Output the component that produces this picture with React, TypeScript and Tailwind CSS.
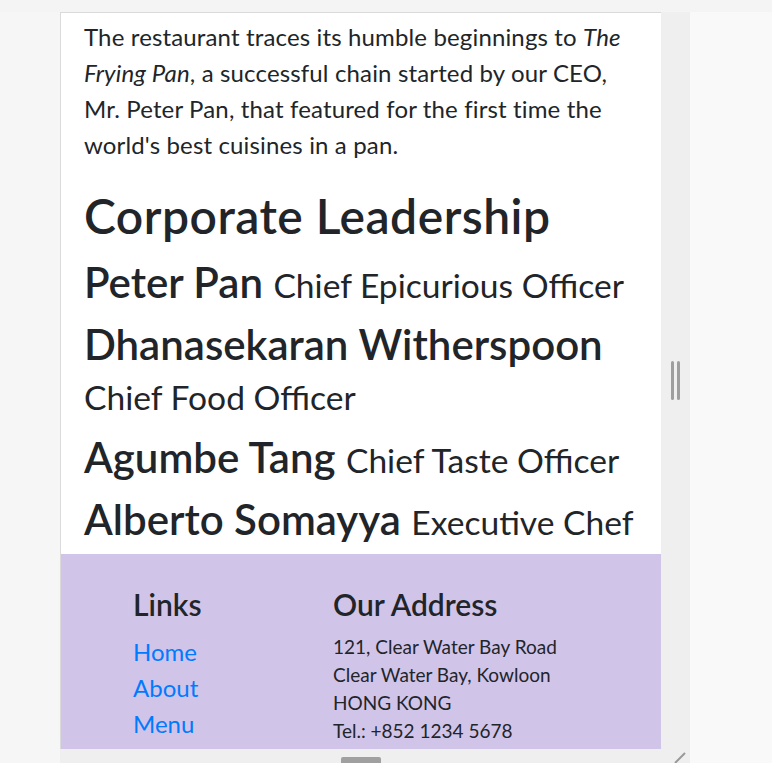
import React from "react";

export default function App() {
  const font = { fontFamily: 'Lato, "Open Sans", sans-serif' };
  return (
    <div className="w-[772px] h-[763px] overflow-hidden bg-[#f9f9f9] flex flex-col" style={font}>
      <div className="h-[12px] bg-[#f4f4f4] shrink-0" />
      <div className="flex flex-1 min-h-0">
        <div className="w-[60px] bg-[#f6f6f6] shrink-0" />
        <div className="w-[630px] flex flex-col shrink-0">
          <div className="flex flex-1 min-h-0">
            <div className="w-[601px] border-l border-t border-[#dadada] bg-white overflow-hidden text-[#212529] flex flex-col">
              <div className="px-[23px] pt-[6px]">
                <p className="text-[24px] leading-[36px] mb-[24px] tracking-[0.006em]">
                  The restaurant traces its humble beginnings to <em>The Frying Pan</em>, a successful chain started by our CEO, Mr. Peter Pan, that featured for the first time the world's best cuisines in a pan.
                </p>
                <h2 className="text-[48px] leading-[1.2] font-semibold mb-[12px] tracking-[0.01em]">Corporate Leadership</h2>
                <h3 className="text-[42px] leading-[1.2] font-semibold mb-[12px]">
                  Peter Pan <span className="text-[33.6px] font-normal">Chief Epicurious Officer</span>
                </h3>
                <h3 className="text-[42px] leading-[1.2] font-semibold mb-[12px]">
                  Dhanasekaran Witherspoon <span className="text-[33.6px] font-normal">Chief Food Officer</span>
                </h3>
                <h3 className="text-[42px] leading-[1.2] font-semibold mb-[12px]">
                  Agumbe Tang <span className="text-[33.6px] font-normal">Chief Taste Officer</span>
                </h3>
                <h3 className="text-[42px] leading-[1.2] font-semibold mb-[9px]">
                  Alberto Somayya <span className="text-[33.6px] font-normal">Executive Chef</span>
                </h3>
              </div>
              <div className="bg-[#d1c4e9] flex pt-[32px] flex-1">
                <div className="w-[250px] pl-[72px] shrink-0">
                  <h5 className="text-[30px] leading-[36px] font-semibold mb-[12px]">Links</h5>
                  <ul className="text-[24px] leading-[36px] text-[#007bff]">
                    <li>Home</li>
                    <li>About</li>
                    <li>Menu</li>
                  </ul>
                </div>
                <div className="pl-[22px]">
                  <h5 className="text-[30px] leading-[36px] font-semibold mb-[11px]">Our Address</h5>
                  <address className="not-italic text-[19px] leading-[28px]">
                    121, Clear Water Bay Road<br />
                    Clear Water Bay, Kowloon<br />
                    HONG KONG<br />
                    Tel.: +852 1234 5678
                  </address>
                </div>
              </div>
            </div>
            <div className="w-[29px] bg-[#efefef] relative">
              <div className="absolute left-[10px] top-[349px] w-[3px] h-[39px] bg-[#9e9e9e] rounded-full" />
              <div className="absolute left-[16px] top-[349px] w-[3px] h-[39px] bg-[#9e9e9e] rounded-full" />
            </div>
          </div>
          <div className="h-[14px] bg-[#efefef] relative shrink-0">
            <div className="absolute left-[281px] top-[8px] w-[40px] h-[6px] bg-[#a0a0a0] rounded-t-[2px]" />
            <svg className="absolute left-[612px] top-[2px]" width="14" height="12" viewBox="0 0 14 12">
              <line x1="3" y1="12" x2="13" y2="2" stroke="#999" strokeWidth="2" />
            </svg>
          </div>
        </div>
        <div className="flex-1" />
      </div>
    </div>
  );
}
